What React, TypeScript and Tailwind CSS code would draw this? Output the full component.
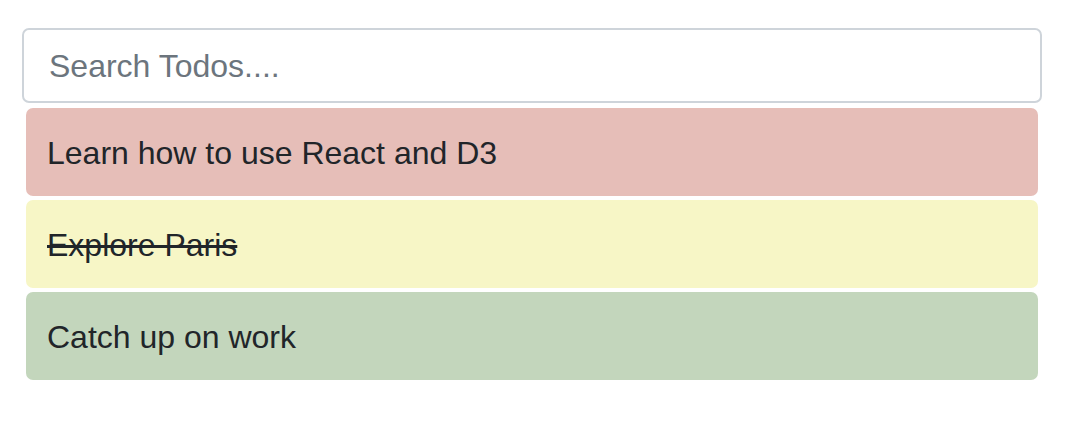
import { useState } from 'react';

type Todo = { id: number; text: string; done: boolean; color: string };

const todos: Todo[] = [
  { id: 1, text: 'Learn how to use React and D3', done: false, color: 'bg-[#e6beb8]' },
  { id: 2, text: 'Explore Paris', done: true, color: 'bg-[#f7f6c6]' },
  { id: 3, text: 'Catch up on work', done: false, color: 'bg-[#c3d6bc]' },
];

export default function App() {
  const [query, setQuery] = useState('');
  const visible = todos.filter((t) => t.text.toLowerCase().includes(query.toLowerCase()));

  return (
    <div className="min-h-screen bg-white pt-[28px] pl-[22px] pr-[28px] font-['Liberation_Sans',Arial,sans-serif]">
      <input
        value={query}
        onChange={(e) => setQuery(e.target.value)}
        placeholder="Search Todos...."
        className="block w-[1020px] h-[75px] rounded-[7px] border-2 border-[#ced4da] bg-white px-[25px] pt-[2px] text-[32px] text-[#495057] placeholder:text-[#6c757d] outline-none"
      />
      <ul className="mt-[5px] ml-[4px] w-[1012px] flex flex-col gap-[4px]">
        {visible.map((t) => (
          <li
            key={t.id}
            className={`${t.color} h-[88px] rounded-[7px] px-[21px] pt-[2px] flex items-center text-[32px] text-[#212529] ${t.done ? 'line-through' : ''}`}
          >
            {t.text}
          </li>
        ))}
      </ul>
    </div>
  );
}
